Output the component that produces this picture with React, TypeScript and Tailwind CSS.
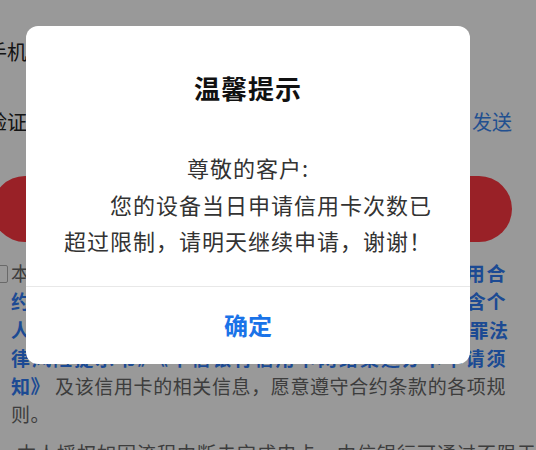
import React from 'react';

type Seg = { t: string; link?: boolean };

const agreementLines: Seg[][] = [
  [{ t: '本人已阅读并同意' }, { t: '《中信银行信用卡（个人卡）领用合', link: true }],
  [{ t: '约》《中信银行信用卡章程》《中信银行信用卡收集包含个', link: true }],
  [{ t: '人敏感信息在内的授权书》《防范信用卡诈骗及违法犯罪法', link: true }],
  [{ t: '律风险提示书》《中信银行信用卡网络渠道办卡申请须', link: true }],
  [{ t: '知》', link: true }, { t: ' 及该信用卡的相关信息，愿意遵守合约条款的各项规' }],
];

const App = () => {
  return (
    <div className="h-[450px] overflow-hidden bg-white font-['Noto_Sans_CJK_SC','Noto_Sans',sans-serif]">
      <div className="relative h-full w-[576px] -ml-[40px]">
        {/* Page behind the dialog */}
        <div className="pl-[22px] pr-[24px] pt-[17px]">
          <div className="flex h-[70px] items-center pl-[5px] text-[20px] text-[#222]">
            <span>手机号</span>
          </div>
          <div className="flex h-[70px] items-center justify-between pl-[5px] text-[20px] text-[#222]">
            <span>验证码</span>
            <span className="text-[#3a86f0]">发送</span>
          </div>

          <button className="ml-[10px] mt-[19px] flex h-[66px] w-[520px] items-center justify-center rounded-full bg-[#ff3741] text-[22px] text-white">
            立即申请
          </button>

          <div className="ml-[8px] mr-[6px] mt-[17px] flex gap-[3px]">
            <div className="mt-[6px] h-[18px] w-[18px] shrink-0 rounded-[2px] border-[1.5px] border-[#b0b0b0] bg-white" />
            <div className="min-w-0 flex-1 text-[19px] leading-[28.3px] tracking-[0.5px] text-[#666]">
              {agreementLines.map((line, i) => (
                <div key={i} className="whitespace-nowrap text-justify [text-align-last:justify]">
                  {line.map((s, j) => (
                    <span key={j} className={s.link ? 'font-bold text-[#2f7cf6]' : ''}>
                      {s.t}
                    </span>
                  ))}
                </div>
              ))}
              <div>则。</div>
            </div>
          </div>

          <p className="mt-[10px] whitespace-nowrap pl-[35px] text-[19px] leading-[28.3px] tracking-[1px] text-[#666]">
            本人授权如因流程中断未完成申卡，中信银行可通过不限于电话、短信等方式联系本人。
          </p>
        </div>

        {/* Dialog */}
        <div className="absolute inset-0 flex justify-center bg-black/40 pt-[26px]">
          <div className="flex h-[338px] w-[444px] flex-col overflow-hidden rounded-[12px] bg-white">
            <h2 className="pt-[44px] text-center text-[26px] font-bold leading-[36px] tracking-[1px] text-[#111]">
              温馨提示
            </h2>
            <p className="mt-[43px] pb-[27px] text-center text-[22px] leading-[36.5px] tracking-[1px] text-[#333]">
              尊敬的客户:
              <br />
              {'\u3000\u3000'}您的设备当日申请信用卡次数已
              <br />
              超过限制，请明天继续申请，谢谢！
            </p>
            <button className="flex flex-1 items-center justify-center border-t-[1.5px] border-[#e8e8e8] text-[24px] font-bold text-[#1a73e8]">
              确定
            </button>
          </div>
        </div>
      </div>
    </div>
  );
};

export default App;
